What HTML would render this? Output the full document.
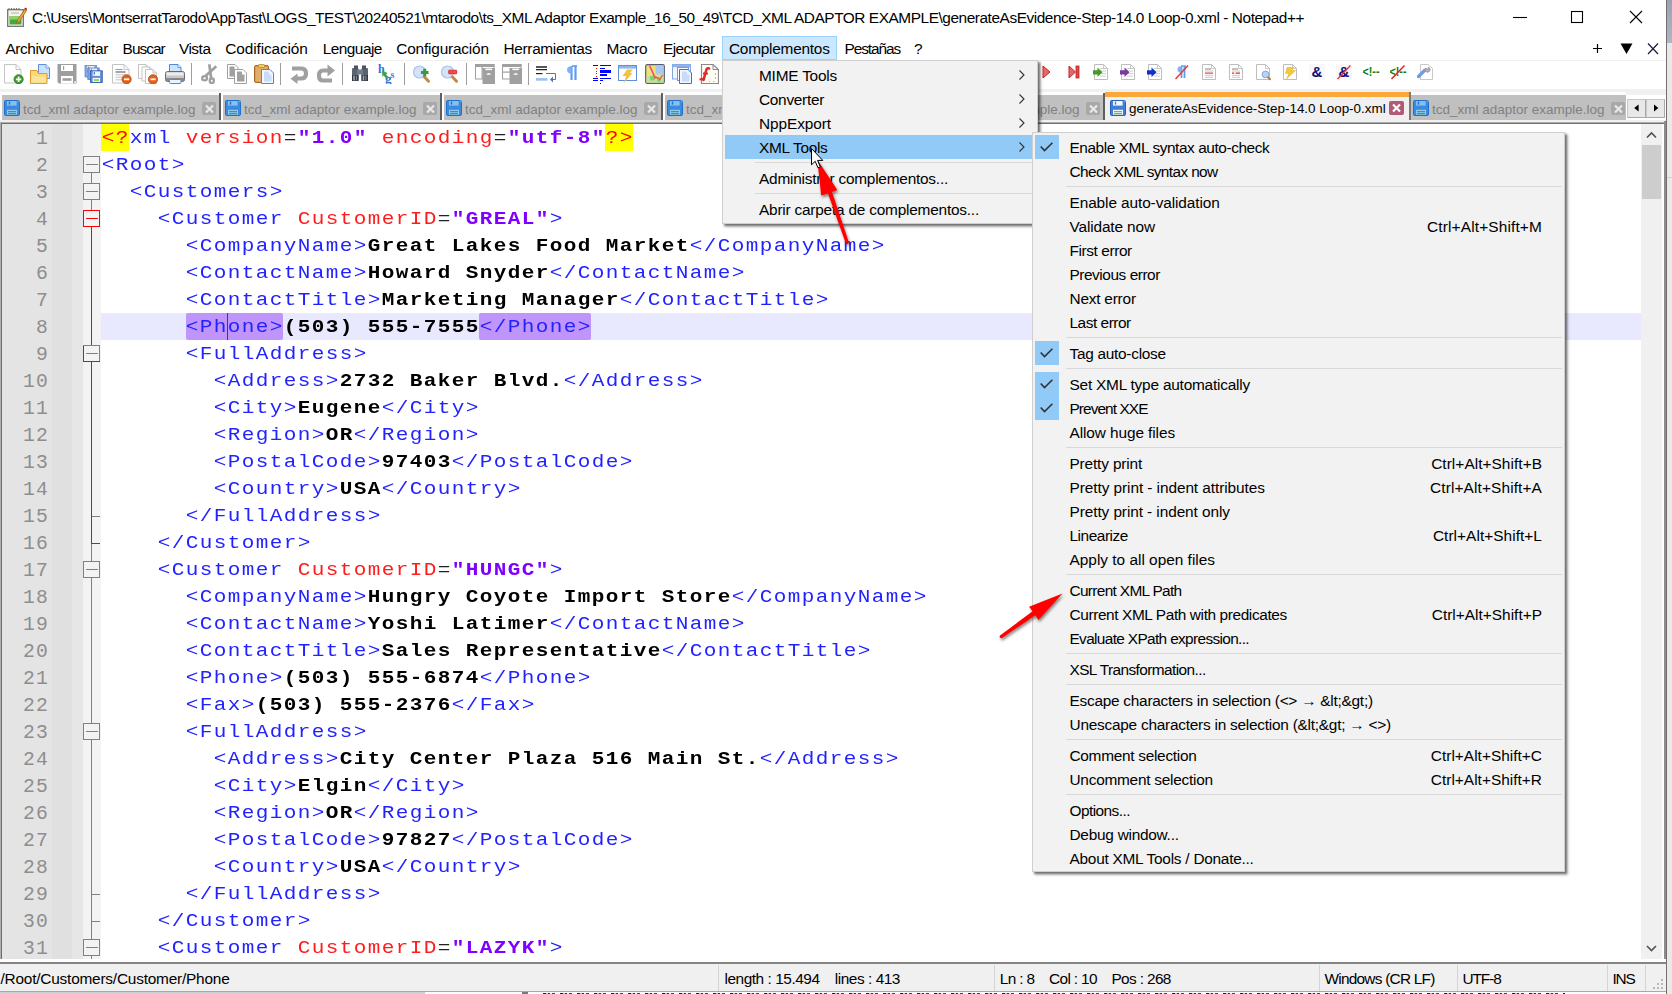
<!DOCTYPE html>
<html lang="es"><head><meta charset="utf-8"><title>Notepad++</title>
<style>
*{box-sizing:border-box;margin:0;padding:0}
html,body{width:1672px;height:994px;overflow:hidden;background:#fff}
body{position:relative;font-family:"Liberation Sans",sans-serif;font-size:15px;color:#000}
.abs{position:absolute}
.t{position:absolute;white-space:pre;line-height:20px;height:20px}
.ui{font-family:"Liberation Sans",sans-serif;font-size:15.4px}
.code{font-family:"Liberation Mono",monospace;font-size:21px;letter-spacing:1.398px;line-height:27px;white-space:pre;position:absolute;left:101.7px;height:27px;color:#000;font-weight:bold;transform:scaleY(.9);transform-origin:0 19.1px;margin-top:.2px}
.code .tg{font-weight:normal;color:#2222ff}
.code .at{font-weight:normal;color:#ff1c1c}
.code .vl{font-weight:bold;color:#8000ff}
.code .op{font-weight:normal;color:#222}
.code .pi{font-weight:normal;color:#ff0000}
.ln{position:absolute;left:0;width:48.9px;text-align:right;font-family:"Liberation Mono",monospace;font-size:19.7px;letter-spacing:1.18px;line-height:27px;height:27px;color:#8e8e8e;margin-top:1.9px}
.tab{position:absolute;top:95px;height:25px;color:#808080;font-size:13.5px}
.tab .lbl{position:absolute;left:23px;top:5.5px;line-height:18px;white-space:pre}
.tabsep{position:absolute;top:93px;width:4px;height:27.4px;background:linear-gradient(90deg,#5e5e5e 0,#5e5e5e 1.6px,#fff 1.6px,#fff 3.8px,transparent 3.8px)}
.cls{position:absolute;top:6.5px;width:14px;height:13.5px;background:#a8a8a8;border-radius:2px}
.pop{position:absolute;background:#f2f2f2;border:1px solid #cfcfcf;box-shadow:2px 2px 2px rgba(0,0,0,.45),3px 3px 3px rgba(0,0,0,.2)}
.mi{position:absolute;white-space:pre;line-height:24px;height:24px;font-size:15.4px;margin-top:1px}
.sep{position:absolute;height:1px;background:#d8d8d8}
.chk{position:absolute;width:24px;height:24px;background:#91c9f7}
.sb{position:absolute;top:969px;line-height:20px;white-space:pre;font-size:15px}
.sbsep{position:absolute;top:965px;width:1px;height:26px;background:#d4d4d4}
</style></head>
<body>
<div class="abs" style="left:0;top:0;width:1666px;height:36px;background:#fff"></div>
<div class="abs" style="left:7px;top:7px;width:20px;height:20px"><svg width="20" height="20" viewBox="0 0 20 20" ><rect x="0.7" y="2.7" width="15.6" height="16.6" fill="#f4f4ec" stroke="#6a6a6a" stroke-width="1.2"/><path d="M2 2.5V1M4.5 2.5V1M7 2.5V1M9.5 2.5V1M12 2.5V1" stroke="#777" stroke-width="1.2"/><rect x="2.5" y="9" width="12" height="8.5" fill="#4aa83a"/><rect x="2.5" y="9" width="12" height="3.5" fill="#8fd06a"/><path d="M4 6H12" stroke="#b0b0a0" stroke-width="1"/><path d="M18.5 1L10.5 13L9.5 16L12.5 14.5L20 3Z" fill="#f0a030" stroke="#8a5a10" stroke-width=".6"/><path d="M18.3 0.5L20 1.6L19 3.2L17.3 2Z" fill="#c02020"/></svg></div>
<div class="t ui" style="left:32px;top:8px;letter-spacing:-0.440px;">C:\Users\MontserratTarodo\AppTast\LOGS_TEST\20240521\mtarodo\ts_XML Adaptor Example_16_50_49\TCD_XML ADAPTOR EXAMPLE\generateAsEvidence-Step-14.0 Loop-0.xml - Notepad++</div>
<svg class="abs" style="left:1500px;top:0" width="166" height="36" viewBox="0 0 166 36" fill="none" stroke="#000" stroke-width="1.1"><path d="M13 17.5H27"/><rect x="71.5" y="11.5" width="11" height="11"/><path d="M130 11L142 23M142 11L130 23"/></svg>
<div class="abs" style="left:0;top:36px;width:1666px;height:24px;background:#fff"></div>
<div class="abs" style="left:722px;top:36px;width:115px;height:24px;background:#cce8ff;border:1px solid #99d1ff"></div>
<div class="t ui" style="left:5.5px;top:38.7px;letter-spacing:-0.404px;">Archivo</div>
<div class="t ui" style="left:69.6px;top:38.7px;letter-spacing:-0.303px;">Editar</div>
<div class="t ui" style="left:122.6px;top:38.7px;letter-spacing:-0.951px;">Buscar</div>
<div class="t ui" style="left:178.9px;top:38.7px;letter-spacing:-0.468px;">Vista</div>
<div class="t ui" style="left:225.3px;top:38.7px;letter-spacing:-0.120px;">Codificación</div>
<div class="t ui" style="left:322.8px;top:38.7px;letter-spacing:-0.543px;">Lenguaje</div>
<div class="t ui" style="left:396.3px;top:38.7px;letter-spacing:-0.190px;">Configuración</div>
<div class="t ui" style="left:503.6px;top:38.7px;letter-spacing:-0.348px;">Herramientas</div>
<div class="t ui" style="left:606.6px;top:38.7px;letter-spacing:-0.473px;">Macro</div>
<div class="t ui" style="left:663px;top:38.7px;letter-spacing:-0.609px;">Ejecutar</div>
<div class="t ui" style="left:729px;top:38.7px;letter-spacing:-0.243px;">Complementos</div>
<div class="t ui" style="left:844.6px;top:38.7px;letter-spacing:-1.096px;">Pestañas</div>
<div class="t ui" style="left:914px;top:38.7px;letter-spacing:-1.562px;">?</div>
<svg class="abs" style="left:1590px;top:40px" width="74" height="18" viewBox="0 0 74 18"><path d="M7.5 4V13M3 8.5H12" stroke="#000" stroke-width="1.2" fill="none"/><path d="M30.5 3.5H42.5L36.5 14Z" fill="#000"/><path d="M58 3.5L68 14M68 3.5L58 14" stroke="#1a1a40" stroke-width="1.2" fill="none"/></svg>
<div class="abs" style="left:0;top:60px;width:1666px;height:1px;background:#f0f0f0"></div>
<div class="abs" style="left:0;top:61px;width:1666px;height:28px;background:#fff"></div>
<div class="abs" style="left:0;top:89px;width:1666px;height:6px;background:#f0f0f0"></div>
<div class="abs" style="left:0;top:92px;width:1626px;height:3px;background:#fdfdfd"></div>
<div class="abs" style="left:4px;top:64px;width:20px;height:20px"><svg width="20" height="20" viewBox="0 0 20 20" ><path d="M0.5 0.5H12L17 5.5V19H0.5Z" fill="#fff" stroke="#c4c4c4" stroke-width="1"/><path d="M12 0.5V5.5H17" fill="none" stroke="#c4c4c4" stroke-width="1"/><circle cx="14.6" cy="15.3" r="4.6" fill="#3d9a2e"/><circle cx="14.6" cy="15.3" r="4.6" fill="none" stroke="#2c7a20" stroke-width=".8"/><path d="M14.6 12.6V18M11.9 15.3H17.3" stroke="#fff" stroke-width="1.7"/></svg></div>
<div class="abs" style="left:30px;top:64px;width:20px;height:20px"><svg width="20" height="20" viewBox="0 0 20 20" ><path d="M8.5 0.5H16L19.5 4V14.5H8.5Z" fill="#cfe0fb" stroke="#5b8fe0"/><path d="M16 0.5V4H19.5" fill="#e8f0ff" stroke="#5b8fe0" stroke-width=".8"/><path d="M0.5 19.5V6.5H7L8.5 9.5H17V19.5Z" fill="#f9d978" stroke="#e59a2b"/><path d="M1.5 12C5 11 6 13 9 12.5H16V18.5H1.5Z" fill="#fbe7a0" opacity=".8"/></svg></div>
<div class="abs" style="left:57px;top:64px;width:20px;height:20px"><svg width="20" height="20" viewBox="0 0 20 20" ><path d="M0.5 0H19.5V19.5H2L0.5 18Z" fill="#9e9e9e"/><rect x="4" y="1" width="12" height="6" fill="#fff"/><rect x="6" y="2" width="1.2" height="4" fill="#9e9e9e"/><rect x="4" y="12" width="12" height="7.5" fill="#fff"/><rect x="5.5" y="14.2" width="9" height="2.6" fill="#9e9e9e"/><rect x="17.3" y="17.3" width="1.6" height="1.6" fill="#fff"/></svg></div>
<div class="abs" style="left:84px;top:64px;width:20px;height:20px"><svg width="20" height="20" viewBox="0 0 20 20" ><g transform="translate(1 1.5) scale(0.95)"><rect x="0" y="0" width="12" height="12" fill="#8aa8e0" stroke="#5f84cc" stroke-width=".8"/><rect x="2.2" y="0.6" width="7.6" height="4.6" fill="#eef3fc"/><rect x="3.3" y="1.2" width="1" height="2.6" fill="#5f84cc"/><rect x="2.2" y="7.2" width="7.6" height="4.2" fill="#f4f7fd"/><rect x="3.4" y="8.6" width="5.2" height="1.6" fill="#7ed321"/></g><g transform="translate(3.8 4) scale(0.95)"><rect x="0" y="0" width="12" height="12" fill="#7c9fdc" stroke="#5078c4" stroke-width=".8"/><rect x="2.2" y="0.6" width="7.6" height="4.6" fill="#eef3fc"/><rect x="3.3" y="1.2" width="1" height="2.6" fill="#5078c4"/><rect x="2.2" y="7.2" width="7.6" height="4.2" fill="#f4f7fd"/><rect x="3.4" y="8.6" width="5.2" height="1.6" fill="#7ed321"/></g><g transform="translate(6.5 6.8) scale(0.98)"><rect x="0" y="0" width="12" height="12" fill="#5f8bdc" stroke="#2450a8" stroke-width=".8"/><rect x="2.2" y="0.6" width="7.6" height="4.6" fill="#eef3fc"/><rect x="3.3" y="1.2" width="1" height="2.6" fill="#2450a8"/><rect x="2.2" y="7.2" width="7.6" height="4.2" fill="#f4f7fd"/><rect x="3.4" y="8.6" width="5.2" height="1.6" fill="#7ed321"/></g></svg></div>
<div class="abs" style="left:112px;top:64px;width:20px;height:20px"><svg width="20" height="20" viewBox="0 0 20 20" ><path d="M0.5 0.5H12L17 5.5V19H0.5Z" fill="#fff" stroke="#c4c4c4" stroke-width="1"/><path d="M12 0.5V5.5H17" fill="none" stroke="#c4c4c4" stroke-width="1"/><path d="M3.5 5.5H10.5" stroke="#9a9a9a" stroke-width="1"/><path d="M3.5 8H13.5" stroke="#8c8c8c" stroke-width="1.6"/><path d="M3.5 10.8H13.5" stroke="#c0c0c0" stroke-width="1"/><path d="M3.5 13.2H13.5" stroke="#c0c0c0" stroke-width="1"/><path d="M3.5 15.8H13.5" stroke="#c0c0c0" stroke-width="1"/><circle cx="14.6" cy="15.3" r="4.6" fill="#e2601a"/><circle cx="14.6" cy="15.3" r="4.6" fill="none" stroke="#c24a0c" stroke-width=".8"/><path d="M12 15.3H17.2" stroke="#fff" stroke-width="1.8"/></svg></div>
<div class="abs" style="left:138px;top:64px;width:20px;height:20px"><svg width="20" height="20" viewBox="0 0 20 20" ><path d="M0.5 0.5H8L11 3.5V14.5H0.5Z" fill="#fff" stroke="#c4c4c4" stroke-width="1"/><path d="M8 0.5V3.5H11" fill="none" stroke="#c4c4c4" stroke-width="1"/><path d="M4 3H11.5L14.5 6V17H4Z" fill="#fff" stroke="#c4c4c4" stroke-width="1"/><path d="M11.5 3V6H14.5" fill="none" stroke="#c4c4c4" stroke-width="1"/><path d="M7.5 5.5H15L18.5 9V19.5H7.5Z" fill="#fff" stroke="#c4c4c4" stroke-width="1"/><path d="M15 5.5V9H18.5" fill="none" stroke="#c4c4c4" stroke-width="1"/><circle cx="15" cy="15.3" r="4.6" fill="#e2601a"/><circle cx="15" cy="15.3" r="4.6" fill="none" stroke="#c24a0c" stroke-width=".8"/><path d="M12.4 15.3H17.6" stroke="#fff" stroke-width="1.8"/></svg></div>
<div class="abs" style="left:165px;top:64px;width:20px;height:20px"><svg width="20" height="20" viewBox="0 0 20 20" ><path d="M4.5 0.5H13L16 3.5V9H4.5Z" fill="#cfe4fb" stroke="#4a8be0"/><path d="M13 0.5V3.5H16" fill="#eef5ff" stroke="#4a8be0" stroke-width=".8"/><rect x="0.5" y="7.5" width="19" height="10" rx="2" fill="#c8c8c8" stroke="#6a6a6a"/><rect x="1.5" y="8.5" width="17" height="3" fill="#ececec"/><rect x="1" y="14" width="18" height="3" fill="#8a8a8a"/><rect x="4.5" y="15.5" width="11.5" height="4" rx="1" fill="#e8f4ff" stroke="#4a8be0"/></svg></div>
<div class="abs" style="left:200px;top:64px;width:20px;height:20px"><svg width="20" height="20" viewBox="0 0 20 20" ><path d="M9.3 0.3L11.2 14.5M16.3 2.2L5.5 12" stroke="#a0a0a0" stroke-width="2.7" fill="none"/><ellipse cx="4.6" cy="14.2" rx="2.4" ry="2.1" fill="#fff" stroke="#a0a0a0" stroke-width="2.3"/><ellipse cx="11.8" cy="16.8" rx="2.1" ry="2.3" fill="#fff" stroke="#a0a0a0" stroke-width="2.3"/></svg></div>
<div class="abs" style="left:227px;top:64px;width:20px;height:20px"><svg width="20" height="20" viewBox="0 0 20 20" ><path d="M0.5 0.5H8L11 3.5V14.5H0.5Z" fill="#fff" stroke="#a0a0a0"/><path d="M2.5 2.5H7.5V5H9V12.5H2.5Z" fill="#a0a0a0"/><path d="M7.5 5.5H16L19.5 9V19.5H7.5Z" fill="#fff" stroke="#a0a0a0"/><path d="M10 7.5H15V10.5H17.5V17.5H10Z" fill="#a0a0a0"/></svg></div>
<div class="abs" style="left:254px;top:64px;width:20px;height:20px"><svg width="20" height="20" viewBox="0 0 20 20" ><rect x="0.5" y="1.5" width="14" height="17" rx="1.5" fill="#d49a55" stroke="#a86a22"/><rect x="1.8" y="3" width="11.4" height="14.5" fill="#e0ad6c"/><rect x="4.5" y="0.5" width="6" height="3" rx="0.8" fill="#f3cf62" stroke="#b98a2a" stroke-width=".8"/><path d="M7.5 5.5H16L19.5 9V19.5H7.5Z" fill="#f2f6ff" stroke="#4d86de"/><path d="M10 7.5H15V10.5H17.5V17.5H10Z" fill="#c9dcfb"/></svg></div>
<div class="abs" style="left:288px;top:64px;width:20px;height:20px"><svg width="20" height="20" viewBox="0 0 20 20" ><path d="M4 4.5H13Q18 4.5 18 9.5Q18 14.5 13 14.5H8" fill="none" stroke="#a0a0a0" stroke-width="4.2"/><path d="M9.5 9.5V20L2.5 14.7Z" fill="#a0a0a0"/></svg></div>
<div class="abs" style="left:315px;top:64px;width:20px;height:20px"><svg width="20" height="20" viewBox="0 0 20 20" ><path d="M14 6.5H8Q4 6.5 4 11.5Q4 16.5 8 16.5H17" fill="none" stroke="#a0a0a0" stroke-width="4.2"/><path d="M12.5 0.5V12.5L20 6.5Z" fill="#a0a0a0"/></svg></div>
<div class="abs" style="left:350px;top:64px;width:20px;height:20px"><svg width="20" height="20" viewBox="0 0 20 20" ><rect x="2" y="4" width="6.5" height="13" rx="1.2" fill="#596470"/><rect x="11.5" y="4" width="6.5" height="13" rx="1.2" fill="#596470"/><rect x="4" y="1.5" width="4" height="4" fill="#4a545e"/><rect x="12" y="1.5" width="4" height="4" fill="#4a545e"/><rect x="7" y="5.5" width="6" height="5" fill="#6f7b88"/><rect x="2" y="11" width="6.5" height="6" fill="#2f363d"/><rect x="11.5" y="11" width="6.5" height="6" fill="#2f363d"/><rect x="3.2" y="11.5" width="1.6" height="5" fill="#9aa6b2"/><rect x="12.7" y="11.5" width="1.6" height="5" fill="#9aa6b2"/><rect x="5.8" y="11.5" width="1.2" height="5" fill="#7a8692"/><rect x="15.3" y="11.5" width="1.2" height="5" fill="#7a8692"/></svg></div>
<div class="abs" style="left:378px;top:64px;width:20px;height:20px"><svg width="20" height="20" viewBox="0 0 20 20" ><text x="0" y="9" font-family="Liberation Serif,serif" font-weight="bold" font-size="12" fill="#2f6fe0">h</text><text x="7" y="19" font-family="Liberation Serif,serif" font-weight="bold" font-size="13" fill="#2f6fe0">g</text><text x="12.5" y="14" font-family="Liberation Serif,serif" font-weight="bold" font-size="10" fill="#3f7fe8">s</text><path d="M4 6.5L9.5 9L8 10.5L10.5 13L8 14.2L5.5 11.5L4.5 13Z" fill="#3aa648"/></svg></div>
<div class="abs" style="left:411px;top:64px;width:20px;height:20px"><svg width="20" height="20" viewBox="-1.5 -1 20 20" ><circle cx="7" cy="7" r="6" fill="#d5e3f8" stroke="#a9c3ec" stroke-width="1.2"/><path d="M12 12L16 16.2" stroke="#c08a4a" stroke-width="3" stroke-linecap="round"/><path d="M12.2 3.8V11.2M8.5 7.5H16" stroke="#3a9a3a" stroke-width="3"/></svg></div>
<div class="abs" style="left:438px;top:64px;width:20px;height:20px"><svg width="20" height="20" viewBox="-2.5 -1 20 20" ><circle cx="7" cy="7" r="6" fill="#d5e3f8" stroke="#a9c3ec" stroke-width="1.2"/><path d="M12 12L16 16.2" stroke="#c08a4a" stroke-width="3" stroke-linecap="round"/><rect x="8.2" y="5.2" width="8" height="3.6" rx=".6" fill="#f04a4a" stroke="#e01818" stroke-width=".8"/></svg></div>
<div class="abs" style="left:475px;top:64px;width:20px;height:20px"><svg width="20" height="20" viewBox="0 0 20 20" ><rect x="0" y="0" width="19.5" height="3" fill="#a0a0a0"/><rect x="0.5" y="0.5" width="18.5" height="14.5" fill="none" stroke="#a0a0a0"/><rect x="6.5" y="0" width="1.2" height="15" fill="#a0a0a0"/><rect x="7.5" y="4" width="12.5" height="16" fill="#a0a0a0"/><rect x="10.3" y="4.6" width="6.8" height="1.5" fill="#fff"/><path d="M11.2 10.8Q13.7 7.4 16.2 10.8Z" fill="#fff"/></svg></div>
<div class="abs" style="left:502px;top:64px;width:20px;height:20px"><svg width="20" height="20" viewBox="0 0 20 20" ><rect x="0" y="0" width="19.5" height="3" fill="#a0a0a0"/><rect x="0.5" y="0.5" width="18.5" height="14.5" fill="none" stroke="#a0a0a0"/><rect x="0" y="7.5" width="8" height="1.2" fill="#a0a0a0"/><rect x="7.5" y="4" width="12.5" height="16" fill="#a0a0a0"/><rect x="10.3" y="4.6" width="6.8" height="1.5" fill="#fff"/><path d="M11.2 10.8Q13.7 7.4 16.2 10.8Z" fill="#fff"/></svg></div>
<div class="abs" style="left:536px;top:64px;width:20px;height:20px"><svg width="20" height="20" viewBox="0 0 20 20" ><path d="M0 3H11M0 5.6H11" stroke="#222" stroke-width="1.4"/><path d="M0 9.6H6.5" stroke="#222" stroke-width="1.2"/><path d="M0 15.4H11.5" stroke="#9cc0f2" stroke-width="2.6"/><path d="M10 9.5H19.5V15.5H15" fill="none" stroke="#3f78c8" stroke-width="1"/><path d="M17 12.5V18.5L14 15.5Z" fill="#3f78c8"/></svg></div>
<div class="abs" style="left:563px;top:64px;width:20px;height:20px"><svg width="20" height="20" viewBox="0 0 20 20" ><path d="M8.5 2V16M12.5 2V16" stroke="#5f9cf0" stroke-width="2.2"/><path d="M9 2H14" stroke="#5f9cf0" stroke-width="1.6"/><path d="M8.5 2.2Q4 2 4 5.8Q4 9.5 8.5 9.4Z" fill="#7db2f6"/></svg></div>
<div class="abs" style="left:592px;top:64px;width:20px;height:20px"><svg width="20" height="20" viewBox="0 0 20 20" shape-rendering="crispEdges"><path d="M1 1.5H6M8 1.5H19M1 14.5H6M8 14.5H19" stroke="#0000ff" stroke-width="1"/><path d="M1 16.5H6M8 16.5H10.5" stroke="#0000ff" stroke-width="1"/><path d="M8 4.5H12.5" stroke="#0000ff" stroke-width="1"/><rect x="8" y="6" width="11" height="3" fill="#0000ff"/><rect x="8" y="10" width="7" height="2" fill="#0000ff"/><path d="M4.5 4V13" stroke="#ff0000" stroke-width="1.2" stroke-dasharray="1.2 1.4"/><rect x="8" y="18.5" width="1.2" height="1.2" fill="#0000ff"/></svg></div>
<div class="abs" style="left:618px;top:64px;width:20px;height:20px"><svg width="20" height="20" viewBox="0 0 20 20" ><rect x="0.5" y="1.5" width="18" height="15" fill="#fff" stroke="#5f8fd6"/><rect x="1" y="2" width="17" height="2.6" fill="#8fb6ee"/><path d="M9 5.5H15L12 9H14.5L6 19L8 12H4.5Z" fill="#f4c23c"/></svg></div>
<div class="abs" style="left:645px;top:64px;width:20px;height:20px"><svg width="20" height="20" viewBox="0 0 20 20" ><rect x="0.7" y="0.7" width="18.6" height="18.6" rx="1.6" fill="#ece27a" stroke="#5a5a70" stroke-width="1.2"/><rect x="10.5" y="1.5" width="8" height="9" fill="#a9c8f2"/><rect x="1.5" y="12" width="17" height="6.6" fill="#bfe0a8"/><circle cx="7.5" cy="14" r="2.6" fill="#7ed070"/><circle cx="14" cy="16" r="2" fill="#7ed070"/><path d="M4.5 1.5L10.5 14.5" stroke="#f04a7a" stroke-width="1.6" fill="none"/><path d="M9.5 12.5L15 15L17.5 11" stroke="#f0602a" stroke-width="1.4" fill="none"/><path d="M9 2L11 12" stroke="#f0e060" stroke-width="1.2"/></svg></div>
<div class="abs" style="left:672px;top:64px;width:20px;height:20px"><svg width="20" height="20" viewBox="0 0 20 20" ><rect x="0.5" y="0.5" width="18" height="14.5" fill="#f2f6fd" stroke="#7fa6e4"/><rect x="0.5" y="0.5" width="18" height="2.6" fill="#8fb2ea"/><rect x="5.5" y="3.5" width="11" height="13" fill="#fff" stroke="#6f9ae0"/><path d="M7.5 5.5H16L19.5 9V19.5H7.5Z" fill="#f2f6ff" stroke="#3a72d4"/><path d="M10 7.5H15V10.5H17.5V17.5H10Z" fill="#c9dafa"/></svg></div>
<div class="abs" style="left:699px;top:64px;width:20px;height:20px"><svg width="20" height="20" viewBox="0 0 20 20" ><path d="M2.5 0.5H14L19.5 5.5V19.5H2.5Z" fill="#fffdf4" stroke="#8a8a8a" stroke-width="1.2"/><path d="M14 0.5V5.5H19.5" fill="none" stroke="#8a8a8a"/><path d="M10 4.5Q7.5 3.5 7 7L4.5 16" stroke="#e02a2a" stroke-width="2.6" fill="none" stroke-linecap="round"/><path d="M0.5 15.5L6 14.5M4 9.5H9" stroke="#e02a2a" stroke-width="2"/><path d="M16.5 9V11M16.5 13V15M14 17.5H15.5M10 17.5H11" stroke="#9ab" stroke-width=".8"/></svg></div>
<div class="abs" style="left:191px;top:63px;width:1px;height:22px;background:#9d9d9d"></div>
<div class="abs" style="left:280px;top:63px;width:1px;height:22px;background:#9d9d9d"></div>
<div class="abs" style="left:342px;top:63px;width:1px;height:22px;background:#9d9d9d"></div>
<div class="abs" style="left:404px;top:63px;width:1px;height:22px;background:#9d9d9d"></div>
<div class="abs" style="left:466px;top:63px;width:1px;height:22px;background:#9d9d9d"></div>
<div class="abs" style="left:528px;top:63px;width:1px;height:22px;background:#9d9d9d"></div>
<div class="abs" style="left:1039px;top:64px;width:20px;height:20px"><svg width="20" height="20" viewBox="0 0 20 20" ><path d="M4 2L11 8L4 14Z" fill="#e06a6a" stroke="#c82222" stroke-width="1"/></svg></div>
<div class="abs" style="left:1066px;top:64px;width:20px;height:20px"><svg width="20" height="20" viewBox="0 0 20 20" ><path d="M3 2L9.5 8L3 14Z" fill="#e06a6a" stroke="#c82222" stroke-width="1"/><rect x="10" y="2" width="3" height="12" fill="#d84848" stroke="#c82222" stroke-width=".8"/></svg></div>
<div class="abs" style="left:1093px;top:64px;width:20px;height:20px"><svg width="20" height="20" viewBox="0 0 20 20" ><path d="M1.5 0.5H10.5L14.5 4.5V15.5H1.5Z" fill="#fff" stroke="#bdbdbd"/><path d="M10.5 0.5V4.5H14.5" fill="none" stroke="#bdbdbd" stroke-width=".8"/><path d="M7 4.5H11M7 7H13M8 9.5H13M7 12H13" stroke="#c8c8c8" stroke-width=".9"/><path d="M0 6.2H4.5V3.6L9.5 8.3L4.5 13V10.4H0Z" fill="#4a9a2a"/></svg></div>
<div class="abs" style="left:1120px;top:64px;width:20px;height:20px"><svg width="20" height="20" viewBox="0 0 20 20" ><path d="M1.5 0.5H10.5L14.5 4.5V15.5H1.5Z" fill="#fff" stroke="#bdbdbd"/><path d="M10.5 0.5V4.5H14.5" fill="none" stroke="#bdbdbd" stroke-width=".8"/><path d="M7 4.5H11M7 7H13M8 9.5H13M7 12H13" stroke="#c8c8c8" stroke-width=".9"/><path d="M0 6.2H4.5V3.6L9.5 8.3L4.5 13V10.4H0Z" fill="#7a3a9a"/></svg></div>
<div class="abs" style="left:1147px;top:64px;width:20px;height:20px"><svg width="20" height="20" viewBox="0 0 20 20" ><path d="M1.5 0.5H10.5L14.5 4.5V15.5H1.5Z" fill="#fff" stroke="#bdbdbd"/><path d="M10.5 0.5V4.5H14.5" fill="none" stroke="#bdbdbd" stroke-width=".8"/><path d="M7 4.5H11M7 7H13M8 9.5H13M7 12H13" stroke="#c8c8c8" stroke-width=".9"/><path d="M0 6.2H4.5V3.6L9.5 8.3L4.5 13V10.4H0Z" fill="#1030c8"/></svg></div>
<div class="abs" style="left:1174px;top:64px;width:20px;height:20px"><svg width="20" height="20" viewBox="0 0 20 20" ><path d="M7.5 2V14M10.5 2V14" stroke="#5f9cf0" stroke-width="1.8"/><path d="M7.5 2.2Q3.5 2 3.5 5.4Q3.5 8.6 7.5 8.5Z" fill="#7db2f6"/><path d="M7 2H12" stroke="#5f9cf0" stroke-width="1.4"/><path d="M1.5 15L14 1.5" stroke="#f03030" stroke-width="1.4"/></svg></div>
<div class="abs" style="left:1201px;top:64px;width:20px;height:20px"><svg width="20" height="20" viewBox="0 0 20 20" ><path d="M1.5 0.5H10.5L14.5 4.5V15.5H1.5Z" fill="#fff" stroke="#bdbdbd"/><path d="M10.5 0.5V4.5H14.5" fill="none" stroke="#bdbdbd" stroke-width=".8"/><path d="M4 5H10" stroke="#777" stroke-width=".9"/><path d="M4 7H12M4 11.3H12M4 13.3H12" stroke="#c4c4c4" stroke-width=".9"/><path d="M4 9.1H12" stroke="#e03030" stroke-width="1.1"/></svg></div>
<div class="abs" style="left:1228px;top:64px;width:20px;height:20px"><svg width="20" height="20" viewBox="0 0 20 20" ><path d="M1.5 0.5H10.5L14.5 4.5V15.5H1.5Z" fill="#fff" stroke="#bdbdbd"/><path d="M10.5 0.5V4.5H14.5" fill="none" stroke="#bdbdbd" stroke-width=".8"/><path d="M4 5H10" stroke="#777" stroke-width=".9"/><path d="M4 7H12M4 11.3H12M4 13.3H12" stroke="#c4c4c4" stroke-width=".9"/><path d="M4 9.1H6.2M7.6 9.1H12" stroke="#e03030" stroke-width="1.1"/></svg></div>
<div class="abs" style="left:1255px;top:64px;width:20px;height:20px"><svg width="20" height="20" viewBox="0 0 20 20" ><path d="M1.5 0.5H10.5L14.5 4.5V15.5H1.5Z" fill="#fff" stroke="#bdbdbd"/><path d="M10.5 0.5V4.5H14.5" fill="none" stroke="#bdbdbd" stroke-width=".8"/><circle cx="10.5" cy="10.5" r="3.4" fill="#b9d2f6" stroke="#7fa8e8"/><path d="M13.2 13.4L15 15.2" stroke="#b87a3a" stroke-width="2" stroke-linecap="round"/></svg></div>
<div class="abs" style="left:1282px;top:64px;width:20px;height:20px"><svg width="20" height="20" viewBox="0 0 20 20" ><path d="M1.5 0.5H10.5L14.5 4.5V15.5H1.5Z" fill="#fff" stroke="#bdbdbd"/><path d="M10.5 0.5V4.5H14.5" fill="none" stroke="#bdbdbd" stroke-width=".8"/><path d="M5 3.5H12L9.5 6.5H13.5L4.5 15L7 9.5H3.5Z" fill="#f2c83c" stroke="#e0b020" stroke-width=".5"/></svg></div>
<div class="abs" style="left:1309px;top:64px;width:20px;height:20px"><svg width="20" height="20" viewBox="0 0 20 20" ><rect x="0" y="0" width="16" height="16" fill="#f8f8f8"/><text x="8" y="13.2" text-anchor="middle" font-family="Liberation Sans,sans-serif" font-weight="bold" font-size="15" fill="#10107a">&amp;</text></svg></div>
<div class="abs" style="left:1336px;top:64px;width:20px;height:20px"><svg width="20" height="20" viewBox="0 0 20 20" ><rect x="0" y="0" width="16" height="16" fill="#f8f8f8"/><text x="8" y="13.2" text-anchor="middle" font-family="Liberation Sans,sans-serif" font-weight="bold" font-size="15" fill="#10107a">&amp;</text><path d="M1.5 15L14.5 1.5" stroke="#f03030" stroke-width="1.3"/></svg></div>
<div class="abs" style="left:1363px;top:64px;width:20px;height:20px"><svg width="20" height="20" viewBox="0 0 20 20" ><text x="-0.5" y="12.2" font-family="Liberation Sans,sans-serif" font-weight="bold" font-size="12" fill="#108010" textLength="17" lengthAdjust="spacingAndGlyphs">&lt;!--</text></svg></div>
<div class="abs" style="left:1390px;top:64px;width:20px;height:20px"><svg width="20" height="20" viewBox="0 0 20 20" ><text x="-0.5" y="12.2" font-family="Liberation Sans,sans-serif" font-weight="bold" font-size="12" fill="#108010" textLength="17" lengthAdjust="spacingAndGlyphs">&lt;!--</text><path d="M1.5 15L14.5 1.5" stroke="#f01818" stroke-width="1.4"/></svg></div>
<div class="abs" style="left:1417px;top:64px;width:20px;height:20px"><svg width="20" height="20" viewBox="0 0 20 20" ><path d="M3.5 0.5H11L15.5 4.5V15.5H3.5Z" fill="#fff" stroke="#c8c8c8"/><path d="M1.5 12.5L7.5 6.5" stroke="#6f9ae6" stroke-width="3.2" stroke-linecap="round"/><path d="M7 7L9.5 4.5" stroke="#9a9a9a" stroke-width="2.2"/><path d="M8.2 4.5A2.6 2.6 0 1 0 11.5 3.2L10.8 5.2Z" fill="#b0b0b0" stroke="#8a8a8a" stroke-width=".6"/></svg></div>
<div class="abs" style="left:2px;top:94.6px;width:1624px;height:25.8px;background:#c0c0c0"></div>
<div class="tab" style="left:0px;width:221px"><div class="abs" style="left:4px;top:5px;width:16px;height:16px"><svg width="16" height="16" viewBox="0 0 16 16" ><rect x="0.5" y="0.5" width="15" height="15" rx="1.2" fill="#3b8bdc" stroke="#1f6fcf"/><path d="M13 0.5L15.5 3V0.5Z" fill="#c0c0c0" opacity=".5"/><rect x="3" y="1" width="9.6" height="4.6" fill="#86c0ef"/><rect x="4.8" y="1.6" width="1.4" height="3" fill="#2a6fc4"/><rect x="3" y="9.8" width="10" height="5" fill="#93c8f0"/><rect x="4" y="11" width="8" height="1.2" fill="#2fa37a"/><rect x="4" y="13" width="8" height="1.2" fill="#2fa37a"/></svg></div><div class="lbl">tcd_xml adaptor example.log</div><div class="cls" style="left:202px"><svg width="15" height="14" viewBox="0 0 15 14"><path d="M4 3.5L11 10.5M11 3.5L4 10.5" stroke="#e8e8e8" stroke-width="2.2"/></svg></div></div>
<div class="tabsep" style="left:219.2px"></div>
<div class="tab" style="left:221px;width:221px"><div class="abs" style="left:4px;top:5px;width:16px;height:16px"><svg width="16" height="16" viewBox="0 0 16 16" ><rect x="0.5" y="0.5" width="15" height="15" rx="1.2" fill="#3b8bdc" stroke="#1f6fcf"/><path d="M13 0.5L15.5 3V0.5Z" fill="#c0c0c0" opacity=".5"/><rect x="3" y="1" width="9.6" height="4.6" fill="#86c0ef"/><rect x="4.8" y="1.6" width="1.4" height="3" fill="#2a6fc4"/><rect x="3" y="9.8" width="10" height="5" fill="#93c8f0"/><rect x="4" y="11" width="8" height="1.2" fill="#2fa37a"/><rect x="4" y="13" width="8" height="1.2" fill="#2fa37a"/></svg></div><div class="lbl">tcd_xml adaptor example.log</div><div class="cls" style="left:202px"><svg width="15" height="14" viewBox="0 0 15 14"><path d="M4 3.5L11 10.5M11 3.5L4 10.5" stroke="#e8e8e8" stroke-width="2.2"/></svg></div></div>
<div class="tabsep" style="left:440.2px"></div>
<div class="tab" style="left:442px;width:221px"><div class="abs" style="left:4px;top:5px;width:16px;height:16px"><svg width="16" height="16" viewBox="0 0 16 16" ><rect x="0.5" y="0.5" width="15" height="15" rx="1.2" fill="#3b8bdc" stroke="#1f6fcf"/><path d="M13 0.5L15.5 3V0.5Z" fill="#c0c0c0" opacity=".5"/><rect x="3" y="1" width="9.6" height="4.6" fill="#86c0ef"/><rect x="4.8" y="1.6" width="1.4" height="3" fill="#2a6fc4"/><rect x="3" y="9.8" width="10" height="5" fill="#93c8f0"/><rect x="4" y="11" width="8" height="1.2" fill="#2fa37a"/><rect x="4" y="13" width="8" height="1.2" fill="#2fa37a"/></svg></div><div class="lbl">tcd_xml adaptor example.log</div><div class="cls" style="left:202px"><svg width="15" height="14" viewBox="0 0 15 14"><path d="M4 3.5L11 10.5M11 3.5L4 10.5" stroke="#e8e8e8" stroke-width="2.2"/></svg></div></div>
<div class="tabsep" style="left:661.2px"></div>
<div class="tab" style="left:663px;width:221px"><div class="abs" style="left:4px;top:5px;width:16px;height:16px"><svg width="16" height="16" viewBox="0 0 16 16" ><rect x="0.5" y="0.5" width="15" height="15" rx="1.2" fill="#3b8bdc" stroke="#1f6fcf"/><path d="M13 0.5L15.5 3V0.5Z" fill="#c0c0c0" opacity=".5"/><rect x="3" y="1" width="9.6" height="4.6" fill="#86c0ef"/><rect x="4.8" y="1.6" width="1.4" height="3" fill="#2a6fc4"/><rect x="3" y="9.8" width="10" height="5" fill="#93c8f0"/><rect x="4" y="11" width="8" height="1.2" fill="#2fa37a"/><rect x="4" y="13" width="8" height="1.2" fill="#2fa37a"/></svg></div><div class="lbl">tcd_xml adaptor example.log</div><div class="cls" style="left:202px"><svg width="15" height="14" viewBox="0 0 15 14"><path d="M4 3.5L11 10.5M11 3.5L4 10.5" stroke="#e8e8e8" stroke-width="2.2"/></svg></div></div>
<div class="tabsep" style="left:882.2px"></div>
<div class="tab" style="left:884px;width:221px"><div class="abs" style="left:4px;top:5px;width:16px;height:16px"><svg width="16" height="16" viewBox="0 0 16 16" ><rect x="0.5" y="0.5" width="15" height="15" rx="1.2" fill="#3b8bdc" stroke="#1f6fcf"/><path d="M13 0.5L15.5 3V0.5Z" fill="#c0c0c0" opacity=".5"/><rect x="3" y="1" width="9.6" height="4.6" fill="#86c0ef"/><rect x="4.8" y="1.6" width="1.4" height="3" fill="#2a6fc4"/><rect x="3" y="9.8" width="10" height="5" fill="#93c8f0"/><rect x="4" y="11" width="8" height="1.2" fill="#2fa37a"/><rect x="4" y="13" width="8" height="1.2" fill="#2fa37a"/></svg></div><div class="lbl">tcd_xml adaptor example.log</div><div class="cls" style="left:202px"><svg width="15" height="14" viewBox="0 0 15 14"><path d="M4 3.5L11 10.5M11 3.5L4 10.5" stroke="#e8e8e8" stroke-width="2.2"/></svg></div></div>
<div class="tabsep" style="left:1103.2px"></div>
<div class="tab" style="left:1409px;width:217px"><div class="abs" style="left:4px;top:5px;width:16px;height:16px"><svg width="16" height="16" viewBox="0 0 16 16" ><rect x="0.5" y="0.5" width="15" height="15" rx="1.2" fill="#3b8bdc" stroke="#1f6fcf"/><path d="M13 0.5L15.5 3V0.5Z" fill="#c0c0c0" opacity=".5"/><rect x="3" y="1" width="9.6" height="4.6" fill="#86c0ef"/><rect x="4.8" y="1.6" width="1.4" height="3" fill="#2a6fc4"/><rect x="3" y="9.8" width="10" height="5" fill="#93c8f0"/><rect x="4" y="11" width="8" height="1.2" fill="#2fa37a"/><rect x="4" y="13" width="8" height="1.2" fill="#2fa37a"/></svg></div><div class="lbl">tcd_xml adaptor example.log</div><div class="cls" style="left:202px"><svg width="15" height="14" viewBox="0 0 15 14"><path d="M4 3.5L11 10.5M11 3.5L4 10.5" stroke="#e8e8e8" stroke-width="2.2"/></svg></div></div>
<div class="abs" style="left:1105px;top:92px;width:304px;height:29px;background:#f0f0f0"></div>
<div class="abs" style="left:1105px;top:92px;width:304px;height:5px;background:#faa83a"></div>
<div class="abs" style="left:1409px;top:92px;width:2px;height:29px;background:#7a7a7a"></div>
<div class="abs" style="left:1110px;top:100px;width:16px;height:16px"><svg width="16" height="16" viewBox="0 0 16 16" ><rect x="0.5" y="0.5" width="15" height="15" rx="1.2" fill="#3f7fd8" stroke="#2a5fb8"/><path d="M13 0.5L15.5 3V0.5Z" fill="#c0c0c0" opacity=".5"/><rect x="3" y="1" width="9.6" height="4.6" fill="#f4f7fc"/><rect x="4.8" y="1.6" width="1.4" height="3" fill="#3f7fd8"/><rect x="3" y="9.8" width="10" height="5" fill="#f4f7fc"/><rect x="4" y="11" width="8" height="1.2" fill="#6ac04a"/><rect x="4" y="13" width="8" height="1.2" fill="#6ac04a"/></svg></div>
<div class="abs" style="left:1129px;top:99.5px;font-size:13.43px;line-height:18px;white-space:pre;color:#000">generateAsEvidence-Step-14.0 Loop-0.xml</div>
<div class="abs" style="left:1389px;top:101px;width:15px;height:14px;background:#b05a74;border-radius:2px"><svg width="15" height="14" viewBox="0 0 15 14"><path d="M4 3.5L11 10.5M11 3.5L4 10.5" stroke="#fff" stroke-width="2.2"/></svg></div>
<div class="abs" style="left:1627px;top:99px;width:19px;height:19px;background:#e8e8e8;border:1px solid #c8c8c8;border-right-color:#a8a8a8;border-bottom-color:#a8a8a8"><svg class="abs" style="left:-1px;top:-1px" width="19" height="19" viewBox="0 0 19 19"><path d="M11.6 5.6V12.4L7.2 9Z" fill="#000"/></svg></div>
<div class="abs" style="left:1646px;top:99px;width:19px;height:19px;background:#e8e8e8;border:1px solid #c8c8c8;border-right-color:#a8a8a8;border-bottom-color:#a8a8a8"><svg class="abs" style="left:-1px;top:-1px" width="19" height="19" viewBox="0 0 19 19"><path d="M8 5.6V12.4L12.4 9Z" fill="#000"/></svg></div>
<div class="abs" style="left:0;top:120px;width:1666px;height:2px;background:#f0f0f0"></div>
<div class="abs" style="left:0;top:122px;width:1666px;height:1px;background:#b0b0b0"></div>
<div class="abs" style="left:1px;top:123px;width:1664px;height:1px;background:#6e6e6e"></div>
<div class="abs" style="left:0;top:124px;width:1664px;height:836px;background:#fff"></div>
<div class="abs" style="left:0;top:122px;width:1px;height:840px;background:#b0b0b0"></div>
<div class="abs" style="left:1px;top:123px;width:1px;height:838px;background:#6e6e6e"></div>
<div class="abs" style="left:2px;top:124px;width:50px;height:835px;background:#e4e4e4"></div>
<div class="abs" style="left:52px;top:124px;width:20px;height:835px;background:#e0e0e0"></div>
<div class="abs" style="left:72px;top:124px;width:11px;height:835px;background:#e6e6e6"></div>
<div class="abs" style="left:83px;top:124px;width:18px;height:835px;background:#f3f3f3"></div>
<div class="abs" style="left:101px;top:313px;width:1540px;height:27px;background:#e8e8ff"></div>
<div class="abs" style="left:186px;top:313px;width:97px;height:27px;background:#bf95fb;border-radius:2px"></div>
<div class="abs" style="left:479px;top:313px;width:112px;height:27px;background:#bf95fb;border-radius:2px"></div>
<div class="abs" style="left:227px;top:313px;width:1.4px;height:27px;background:#8000ff"></div>
<div class="abs" style="left:101px;top:124px;width:28px;height:27px;background:#ffff00"></div>
<div class="abs" style="left:605px;top:124px;width:28px;height:27px;background:#ffff00"></div>
<div class="abs" style="left:0;top:124px;width:1641px;height:836px;overflow:hidden">
<div class="ln" style="top:0px">1</div><div class="code" style="top:0px"><span class="pi">&lt;?</span><span class="tg">xml</span> <span class="at">version</span><span class="op">=</span><span class="vl">"1.0"</span> <span class="at">encoding</span><span class="op">=</span><span class="vl">"utf-8"</span><span class="pi">?&gt;</span></div>
<div class="ln" style="top:27px">2</div><div class="code" style="top:27px"><span class="tg">&lt;Root&gt;</span></div>
<div class="ln" style="top:54px">3</div><div class="code" style="top:54px">  <span class="tg">&lt;Customers&gt;</span></div>
<div class="ln" style="top:81px">4</div><div class="code" style="top:81px">    <span class="tg">&lt;Customer</span> <span class="at">CustomerID</span><span class="op">=</span><span class="vl">"GREAL"</span><span class="tg">&gt;</span></div>
<div class="ln" style="top:108px">5</div><div class="code" style="top:108px">      <span class="tg">&lt;CompanyName&gt;</span>Great Lakes Food Market<span class="tg">&lt;/CompanyName&gt;</span></div>
<div class="ln" style="top:135px">6</div><div class="code" style="top:135px">      <span class="tg">&lt;ContactName&gt;</span>Howard Snyder<span class="tg">&lt;/ContactName&gt;</span></div>
<div class="ln" style="top:162px">7</div><div class="code" style="top:162px">      <span class="tg">&lt;ContactTitle&gt;</span>Marketing Manager<span class="tg">&lt;/ContactTitle&gt;</span></div>
<div class="ln" style="top:189px">8</div><div class="code" style="top:189px">      <span class="tg">&lt;Phone&gt;</span>(503) 555-7555<span class="tg">&lt;/Phone&gt;</span></div>
<div class="ln" style="top:216px">9</div><div class="code" style="top:216px">      <span class="tg">&lt;FullAddress&gt;</span></div>
<div class="ln" style="top:243px">10</div><div class="code" style="top:243px">        <span class="tg">&lt;Address&gt;</span>2732 Baker Blvd.<span class="tg">&lt;/Address&gt;</span></div>
<div class="ln" style="top:270px">11</div><div class="code" style="top:270px">        <span class="tg">&lt;City&gt;</span>Eugene<span class="tg">&lt;/City&gt;</span></div>
<div class="ln" style="top:297px">12</div><div class="code" style="top:297px">        <span class="tg">&lt;Region&gt;</span>OR<span class="tg">&lt;/Region&gt;</span></div>
<div class="ln" style="top:324px">13</div><div class="code" style="top:324px">        <span class="tg">&lt;PostalCode&gt;</span>97403<span class="tg">&lt;/PostalCode&gt;</span></div>
<div class="ln" style="top:351px">14</div><div class="code" style="top:351px">        <span class="tg">&lt;Country&gt;</span>USA<span class="tg">&lt;/Country&gt;</span></div>
<div class="ln" style="top:378px">15</div><div class="code" style="top:378px">      <span class="tg">&lt;/FullAddress&gt;</span></div>
<div class="ln" style="top:405px">16</div><div class="code" style="top:405px">    <span class="tg">&lt;/Customer&gt;</span></div>
<div class="ln" style="top:432px">17</div><div class="code" style="top:432px">    <span class="tg">&lt;Customer</span> <span class="at">CustomerID</span><span class="op">=</span><span class="vl">"HUNGC"</span><span class="tg">&gt;</span></div>
<div class="ln" style="top:459px">18</div><div class="code" style="top:459px">      <span class="tg">&lt;CompanyName&gt;</span>Hungry Coyote Import Store<span class="tg">&lt;/CompanyName&gt;</span></div>
<div class="ln" style="top:486px">19</div><div class="code" style="top:486px">      <span class="tg">&lt;ContactName&gt;</span>Yoshi Latimer<span class="tg">&lt;/ContactName&gt;</span></div>
<div class="ln" style="top:513px">20</div><div class="code" style="top:513px">      <span class="tg">&lt;ContactTitle&gt;</span>Sales Representative<span class="tg">&lt;/ContactTitle&gt;</span></div>
<div class="ln" style="top:540px">21</div><div class="code" style="top:540px">      <span class="tg">&lt;Phone&gt;</span>(503) 555-6874<span class="tg">&lt;/Phone&gt;</span></div>
<div class="ln" style="top:567px">22</div><div class="code" style="top:567px">      <span class="tg">&lt;Fax&gt;</span>(503) 555-2376<span class="tg">&lt;/Fax&gt;</span></div>
<div class="ln" style="top:594px">23</div><div class="code" style="top:594px">      <span class="tg">&lt;FullAddress&gt;</span></div>
<div class="ln" style="top:621px">24</div><div class="code" style="top:621px">        <span class="tg">&lt;Address&gt;</span>City Center Plaza 516 Main St.<span class="tg">&lt;/Address&gt;</span></div>
<div class="ln" style="top:648px">25</div><div class="code" style="top:648px">        <span class="tg">&lt;City&gt;</span>Elgin<span class="tg">&lt;/City&gt;</span></div>
<div class="ln" style="top:675px">26</div><div class="code" style="top:675px">        <span class="tg">&lt;Region&gt;</span>OR<span class="tg">&lt;/Region&gt;</span></div>
<div class="ln" style="top:702px">27</div><div class="code" style="top:702px">        <span class="tg">&lt;PostalCode&gt;</span>97827<span class="tg">&lt;/PostalCode&gt;</span></div>
<div class="ln" style="top:729px">28</div><div class="code" style="top:729px">        <span class="tg">&lt;Country&gt;</span>USA<span class="tg">&lt;/Country&gt;</span></div>
<div class="ln" style="top:756px">29</div><div class="code" style="top:756px">      <span class="tg">&lt;/FullAddress&gt;</span></div>
<div class="ln" style="top:783px">30</div><div class="code" style="top:783px">    <span class="tg">&lt;/Customer&gt;</span></div>
<div class="ln" style="top:810px">31</div><div class="code" style="top:810px">    <span class="tg">&lt;Customer</span> <span class="at">CustomerID</span><span class="op">=</span><span class="vl">"LAZYK"</span><span class="tg">&gt;</span></div>
</div>
<svg class="abs" style="left:80px;top:124px" width="24" height="836" viewBox="80 124 24 836" shape-rendering="crispEdges" fill="none"><path d="M91.5 172.5 V183.5" stroke="#808080"/><path d="M91.5 199.5 V210.5" stroke="#808080"/><path d="M91.5 226.5 V345.5" stroke="#ff0000"/><path d="M91.5 361.5 V544" stroke="#ff0000"/><path d="M91 543.5 H100" stroke="#ff0000"/><path d="M92 516.5 H100" stroke="#808080"/><path d="M91.5 544 V561.5" stroke="#808080"/><path d="M91.5 577.5 V723.5" stroke="#808080"/><path d="M91.5 739.5 V939.5" stroke="#808080"/><path d="M92 894.5 H100" stroke="#808080"/><path d="M92 921.5 H100" stroke="#808080"/><path d="M91.5 955.5 V959" stroke="#808080"/><rect x="83.5" y="156.5" width="16" height="16" fill="#f3f3f3" stroke="#808080"/><path d="M86 164.5 H98" stroke="#808080"/><rect x="83.5" y="183.5" width="16" height="16" fill="#f3f3f3" stroke="#808080"/><path d="M86 191.5 H98" stroke="#808080"/><rect x="83.5" y="561.5" width="16" height="16" fill="#f3f3f3" stroke="#808080"/><path d="M86 569.5 H98" stroke="#808080"/><rect x="83.5" y="723.5" width="16" height="16" fill="#f3f3f3" stroke="#808080"/><path d="M86 731.5 H98" stroke="#808080"/><rect x="83.5" y="939.5" width="16" height="16" fill="#f3f3f3" stroke="#808080"/><path d="M86 947.5 H98" stroke="#808080"/><rect x="83.5" y="210.5" width="16" height="16" fill="#f3f3f3" stroke="#ff0000"/><path d="M86 218.5 H98" stroke="#ff0000"/><rect x="83.5" y="345.5" width="16" height="16" fill="#f3f3f3" stroke="#808080"/><path d="M83.5 345.5 V361.5 H99.5" stroke="#ff0000"/><path d="M86 353.5 H98" stroke="#808080"/></svg>
<div class="abs" style="left:1641px;top:124px;width:21px;height:836px;background:#f0f0f0"></div>
<div class="abs" style="left:1642px;top:145px;width:19px;height:54px;background:#cdcdcd"></div>
<svg class="abs" style="left:1641px;top:124px" width="21" height="836" viewBox="0 0 21 836" fill="none" stroke="#505050" stroke-width="1.6"><path d="M6 13.5L10.5 9L15 13.5"/><path d="M6 822L10.5 826.5L15 822"/></svg>
<div class="abs" style="left:1662px;top:124px;width:2px;height:836px;background:#fff"></div>
<div class="abs" style="left:1664px;top:121px;width:2px;height:841px;background:#8c8c8c"></div>
<div class="abs" style="left:0;top:959px;width:1666px;height:3px;background:#fff"></div>
<div class="abs" style="left:0;top:961.5px;width:1666px;height:2px;background:#858585"></div>
<div class="abs" style="left:0;top:963.5px;width:1666px;height:28px;background:#f0f0f0"></div>
<div class="abs" style="left:0;top:990.5px;width:1672px;height:1.5px;background:#a8a8a8"></div>
<div class="abs" style="left:0;top:992px;width:1672px;height:2px;background:#fbfbfb"></div>
<div class="abs" style="left:0;top:992px;width:425px;height:2px;background:#cfcfcf"></div>
<div class="abs" style="left:522px;top:992px;width:6px;height:2px;background:#7a7a7a"></div>
<div class="abs" style="left:543px;top:992.5px;width:1022px;height:1.5px;background:repeating-linear-gradient(90deg,#222 0 3px,#bbb 3px 5px,#333 5px 7px,#eee 7px 9px,#444 9px 12px,#fff 12px 17px)"></div>
<div class="sbsep" style="left:718px"></div>
<div class="sbsep" style="left:994px"></div>
<div class="sbsep" style="left:1319px"></div>
<div class="sbsep" style="left:1457px"></div>
<div class="sbsep" style="left:1607px"></div>
<div class="sbsep" style="left:1645px"></div>
<div class="t ui" style="left:0.5px;top:968.8px;letter-spacing:-0.208px;">/Root/Customers/Customer/Phone</div>
<div class="t ui" style="left:724.5px;top:968.8px;letter-spacing:-0.454px;">length : 15.494    lines : 413</div>
<div class="t ui" style="left:999.8px;top:968.8px;letter-spacing:-0.639px;">Ln : 8    Col : 10    Pos : 268</div>
<div class="t ui" style="left:1324.5px;top:968.8px;letter-spacing:-0.756px;">Windows (CR LF)</div>
<div class="t ui" style="left:1462.4px;top:968.8px;letter-spacing:-1.022px;">UTF-8</div>
<div class="t ui" style="left:1612.6px;top:968.8px;letter-spacing:-1.285px;">INS</div>
<svg class="abs" style="left:1652px;top:978px" width="13" height="13" viewBox="0 0 13 13" fill="#b8b8b8"><rect x="9" y="1" width="2" height="2"/><rect x="5" y="5" width="2" height="2"/><rect x="9" y="5" width="2" height="2"/><rect x="1" y="9" width="2" height="2"/><rect x="5" y="9" width="2" height="2"/><rect x="9" y="9" width="2" height="2"/></svg>
<div class="abs" style="left:1666px;top:0;width:1px;height:994px;background:#707070"></div>
<div class="abs" style="left:1667px;top:0;width:5px;height:994px;background:#e9e9e9"></div>
<div class="abs" style="left:1667px;top:0;width:5px;height:43px;background:linear-gradient(#9aa3b5,#aeb6c4)"></div>
<div class="abs" style="left:1667px;top:177px;width:5px;height:1px;background:#d0d0d0"></div>
<div class="pop" style="left:722px;top:60px;width:316px;height:164px"></div>
<div class="abs" style="left:725px;top:135px;width:311px;height:24px;background:#91c9f7"></div>
<div class="mi" style="left:759px;top:63px;letter-spacing:-0.211px;">MIME Tools</div>
<div class="mi" style="left:759px;top:87px;letter-spacing:-0.286px;">Converter</div>
<div class="mi" style="left:759px;top:111px;letter-spacing:-0.080px;">NppExport</div>
<div class="mi" style="left:759px;top:135px;letter-spacing:-0.278px;">XML Tools</div>
<div class="mi" style="left:759px;top:166px;letter-spacing:-0.223px;">Administrar complementos...</div>
<div class="mi" style="left:759px;top:197px;letter-spacing:-0.209px;">Abrir carpeta de complementos...</div>
<div class="sep" style="left:755px;top:162px;width:281px"></div>
<div class="sep" style="left:755px;top:193px;width:281px"></div>
<svg class="abs" style="left:1016px;top:63px" width="12" height="24" viewBox="0 0 12 24" fill="none" stroke="#333" stroke-width="1.1"><path d="M3.5 7.5L8 12L3.5 16.5"/></svg>
<svg class="abs" style="left:1016px;top:87px" width="12" height="24" viewBox="0 0 12 24" fill="none" stroke="#333" stroke-width="1.1"><path d="M3.5 7.5L8 12L3.5 16.5"/></svg>
<svg class="abs" style="left:1016px;top:111px" width="12" height="24" viewBox="0 0 12 24" fill="none" stroke="#333" stroke-width="1.1"><path d="M3.5 7.5L8 12L3.5 16.5"/></svg>
<svg class="abs" style="left:1016px;top:135px" width="12" height="24" viewBox="0 0 12 24" fill="none" stroke="#333" stroke-width="1.1"><path d="M3.5 7.5L8 12L3.5 16.5"/></svg>
<div class="pop" style="left:1032px;top:132px;width:532.5px;height:740px"></div>
<div class="chk" style="left:1035px;top:135px"><svg width="24" height="24" viewBox="0 0 24 24" fill="none" stroke="#303030" stroke-width="1.5"><path d="M5.7 11.5L9.5 15.6L17.4 7.7"/></svg></div>
<div class="mi" style="left:1069.5px;top:135px;letter-spacing:-0.421px;">Enable XML syntax auto-check</div>
<div class="mi" style="left:1069.5px;top:159px;letter-spacing:-0.608px;">Check XML syntax now</div>
<div class="sep" style="left:1066px;top:186px;width:496px"></div>
<div class="mi" style="left:1069.5px;top:190px;letter-spacing:-0.096px;">Enable auto-validation</div>
<div class="mi" style="left:1069.5px;top:214px;letter-spacing:-0.133px;">Validate now</div>
<div class="mi" style="left:1427px;top:214px;letter-spacing:0.157px;">Ctrl+Alt+Shift+M</div>
<div class="mi" style="left:1069.5px;top:238px;letter-spacing:-0.400px;">First error</div>
<div class="mi" style="left:1069.5px;top:262px;letter-spacing:-0.447px;">Previous error</div>
<div class="mi" style="left:1069.5px;top:286px;letter-spacing:-0.212px;">Next error</div>
<div class="mi" style="left:1069.5px;top:310px;letter-spacing:-0.458px;">Last error</div>
<div class="sep" style="left:1066px;top:337px;width:496px"></div>
<div class="chk" style="left:1035px;top:341px"><svg width="24" height="24" viewBox="0 0 24 24" fill="none" stroke="#303030" stroke-width="1.5"><path d="M5.7 11.5L9.5 15.6L17.4 7.7"/></svg></div>
<div class="mi" style="left:1069.5px;top:341px;letter-spacing:-0.272px;">Tag auto-close</div>
<div class="sep" style="left:1066px;top:368px;width:496px"></div>
<div class="chk" style="left:1035px;top:372px"><svg width="24" height="24" viewBox="0 0 24 24" fill="none" stroke="#303030" stroke-width="1.5"><path d="M5.7 11.5L9.5 15.6L17.4 7.7"/></svg></div>
<div class="mi" style="left:1069.5px;top:372px;letter-spacing:-0.209px;">Set XML type automatically</div>
<div class="chk" style="left:1035px;top:396px"><svg width="24" height="24" viewBox="0 0 24 24" fill="none" stroke="#303030" stroke-width="1.5"><path d="M5.7 11.5L9.5 15.6L17.4 7.7"/></svg></div>
<div class="mi" style="left:1069.5px;top:396px;letter-spacing:-0.920px;">Prevent XXE</div>
<div class="mi" style="left:1069.5px;top:420px;letter-spacing:-0.091px;">Allow huge files</div>
<div class="sep" style="left:1066px;top:447px;width:496px"></div>
<div class="mi" style="left:1069.5px;top:451px;letter-spacing:-0.152px;">Pretty print</div>
<div class="mi" style="left:1431.2px;top:451px;letter-spacing:0.055px;">Ctrl+Alt+Shift+B</div>
<div class="mi" style="left:1069.5px;top:475px;letter-spacing:-0.069px;">Pretty print - indent attributes</div>
<div class="mi" style="left:1430px;top:475px;letter-spacing:0.130px;">Ctrl+Alt+Shift+A</div>
<div class="mi" style="left:1069.5px;top:499px;letter-spacing:-0.083px;">Pretty print - indent only</div>
<div class="mi" style="left:1069.5px;top:523px;letter-spacing:-0.452px;">Linearize</div>
<div class="mi" style="left:1432.9px;top:523px;letter-spacing:0.055px;">Ctrl+Alt+Shift+L</div>
<div class="mi" style="left:1069.5px;top:547px;letter-spacing:0.002px;">Apply to all open files</div>
<div class="sep" style="left:1066px;top:574px;width:496px"></div>
<div class="mi" style="left:1069.5px;top:578px;letter-spacing:-0.663px;">Current XML Path</div>
<div class="mi" style="left:1069.5px;top:602px;letter-spacing:-0.383px;">Current XML Path with predicates</div>
<div class="mi" style="left:1431.8px;top:602px;letter-spacing:0.017px;">Ctrl+Alt+Shift+P</div>
<div class="mi" style="left:1069.5px;top:626px;letter-spacing:-0.648px;">Evaluate XPath expression...</div>
<div class="sep" style="left:1066px;top:653px;width:496px"></div>
<div class="mi" style="left:1069.5px;top:657px;letter-spacing:-0.580px;">XSL Transformation...</div>
<div class="sep" style="left:1066px;top:684px;width:496px"></div>
<div class="mi" style="left:1069.5px;top:688px;letter-spacing:-0.250px;">Escape characters in selection (&lt;&gt; → &amp;lt;&amp;gt;)</div>
<div class="mi" style="left:1069.5px;top:712px;letter-spacing:-0.237px;">Unescape characters in selection (&amp;lt;&amp;gt; → &lt;&gt;)</div>
<div class="sep" style="left:1066px;top:739px;width:496px"></div>
<div class="mi" style="left:1069.5px;top:743px;letter-spacing:-0.278px;">Comment selection</div>
<div class="mi" style="left:1430.8px;top:743px;letter-spacing:0.026px;">Ctrl+Alt+Shift+C</div>
<div class="mi" style="left:1069.5px;top:767px;letter-spacing:-0.247px;">Uncomment selection</div>
<div class="mi" style="left:1430.8px;top:767px;letter-spacing:0.026px;">Ctrl+Alt+Shift+R</div>
<div class="sep" style="left:1066px;top:794px;width:496px"></div>
<div class="mi" style="left:1069.5px;top:798px;letter-spacing:-0.548px;">Options...</div>
<div class="mi" style="left:1069.5px;top:822px;letter-spacing:-0.249px;">Debug window...</div>
<div class="mi" style="left:1069.5px;top:846px;letter-spacing:-0.247px;">About XML Tools / Donate...</div>
<svg class="abs" style="left:790px;top:140px;overflow:visible" width="80" height="120" viewBox="790 140 80 120"><defs><filter id="sh" x="-30%" y="-30%" width="160%" height="160%"><feGaussianBlur in="SourceAlpha" stdDeviation="1.5"/><feOffset dx="1" dy="2"/><feComponentTransfer><feFuncA type="linear" slope="0.5"/></feComponentTransfer><feMerge><feMergeNode/><feMergeNode in="SourceGraphic"/></feMerge></filter></defs><g filter="url(#sh)" fill="#ff0000"><path d="M817.3 159.4L837.3 190.1L832 192L848.8 242.2A1.6 1.6 0 0 1 845.8 243.2L828 193.5L821.2 195.4Z"/></g><path d="M811.5 148.5V164.8L815.2 161.3L818 167.8L820.3 166.8L817.6 160.4H822.8Z" fill="#fff" stroke="#000" stroke-width="1" stroke-linejoin="miter"/></svg>
<svg class="abs" style="left:995px;top:585px;overflow:visible" width="80" height="60" viewBox="995 585 80 60"><g filter="url(#sh)" fill="#ff0000"><path d="M1062.5 593.4L1038.5 620L1035.3 615.2L1002.2 638A1.6 1.6 0 0 1 1000.4 635.3L1032.6 611.2L1029.1 606.7Z"/></g></svg>
</body></html>
